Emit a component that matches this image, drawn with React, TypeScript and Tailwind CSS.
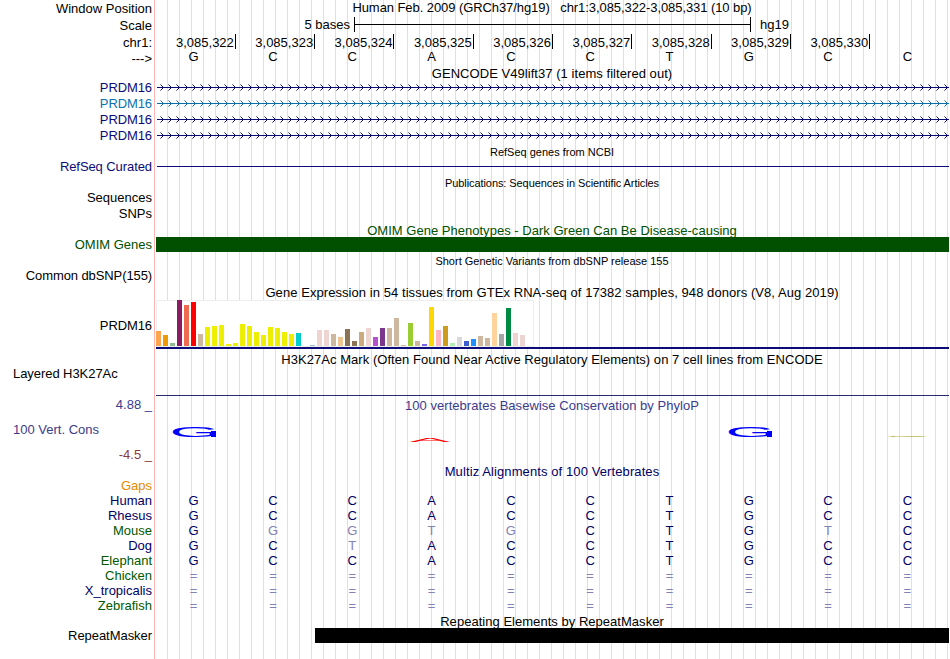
import type { ReactNode } from "react"

const positions = [
  "3,085,322",
  "3,085,323",
  "3,085,324",
  "3,085,325",
  "3,085,326",
  "3,085,327",
  "3,085,328",
  "3,085,329",
  "3,085,330",
]

const genes = [
  { text: "text-[#0c0c78]", color: "#0c0c78" },
  { text: "text-[#0c72b0]", color: "#0c6eaa" },
  { text: "text-[#0c0c78]", color: "#0c0c78" },
  { text: "text-[#0c0c78]", color: "#0c0c78" },
]

// GTEx tissues: [bar height, colour]
const tissues: [number, string][] = [
  [15, "#ffa54f"],
  [11, "#ee9a00"],
  [3, "#8fbc8f"],
  [46, "#8b1c62"],
  [41, "#ee6a50"],
  [44, "#ff0000"],
  [12, "#cdb79e"],
  [19, "#eeee00"],
  [20, "#eeee00"],
  [21, "#eeee00"],
  [2, "#eeee00"],
  [3, "#eeee00"],
  [22, "#eeee00"],
  [20, "#eeee00"],
  [14, "#eeee00"],
  [11, "#eeee00"],
  [19, "#eeee00"],
  [18, "#eeee00"],
  [14, "#eeee00"],
  [12, "#eeee00"],
  [13, "#00cdcd"],
  [0, "#ee82ee"],
  [1, "#9ac0cd"],
  [16, "#eed5d2"],
  [16, "#eed5d2"],
  [12, "#cdb79e"],
  [9, "#eec591"],
  [17, "#8b7355"],
  [5, "#8b7355"],
  [14, "#cdaa7d"],
  [18, "#eed5d2"],
  [9, "#b452cd"],
  [18, "#7a378b"],
  [18, "#cdb79e"],
  [28, "#cdb79e"],
  [1, "#cdb79e"],
  [23, "#9acd32"],
  [5, "#cdb79e"],
  [2, "#7a67ee"],
  [39, "#ffd700"],
  [16, "#ffb6c1"],
  [20, "#cd9b1d"],
  [3, "#b4eeb4"],
  [9, "#d9d9d9"],
  [5, "#3a5fcd"],
  [7, "#1e90ff"],
  [10, "#cdb79e"],
  [8, "#cdb79e"],
  [33, "#ffd39b"],
  [12, "#a6a6a6"],
  [38, "#008b45"],
  [13, "#eed5d2"],
  [11, "#eed5d2"],
  [0, "#ff00ff"],
]

const species = [
  { name: "Human", bases: "GCCACCTGCC", color: "text-[#000064]" },
  { name: "Rhesus", bases: "GCCACCTGCC", color: "text-[#000064]" },
  { name: "Mouse", bases: "GGGTGCTGTC", color: "text-[#005a00]" },
  { name: "Dog", bases: "GCTACCTGCC", color: "text-[#000064]" },
  { name: "Elephant", bases: "GCCACCTGCC", color: "text-[#005a00]" },
  { name: "Chicken", bases: "==========", color: "text-[#005a00]" },
  { name: "X_tropicalis", bases: "==========", color: "text-[#000064]" },
  { name: "Zebrafish", bases: "==========", color: "text-[#005a00]" },
]

const reference = "GCCACCTGCC"

function Track({ label, height, labelClass = "", children }: {
  label?: ReactNode
  height: string
  labelClass?: string
  children?: ReactNode
}) {
  return (
    <div className={`grid grid-cols-[155px_794px] ${height}`}>
      <div className={`pr-[3px] text-right ${labelClass}`}>{label}</div>
      <div>{children}</div>
    </div>
  )
}

function Title({ children, className = "" }: { children: ReactNode; className?: string }) {
  return <div className={`text-center whitespace-pre ${className}`}>{children}</div>
}

function Bases({ bases, compare = false }: { bases: string; compare?: boolean }) {
  return (
    <div className="-ml-px grid w-[793px] grid-cols-10 text-center">
      {bases.split("").map((base, i) => (
        <span key={i} className={!compare ? "" : base === reference[i] ? "text-[#000064]" : "text-[#8282b4]"}>
          {base}
        </span>
      ))}
    </div>
  )
}

function Transcript({ id, color }: { id: string; color: string }) {
  return (
    <svg width="792" height="16" className="ml-0.5 block" shapeRendering="crispEdges">
      <defs>
        <pattern id={id} width="8" height="16" patternUnits="userSpaceOnUse">
          <path d="M4 5h1v1h-1zM5 6h1v1h-1zM5 8h1v1h-1zM4 9h1v1h-1z" fill={color} />
          <path d="M3 4h1v1h-1zM3 10h1v1h-1z" fill={color} opacity="0.55" />
        </pattern>
      </defs>
      <rect width="792" height="16" fill={`url(#${id})`} />
      <rect y="7" width="792" height="1" fill={color} />
    </svg>
  )
}

function Expression() {
  return (
    <div className="ml-px">
      <div className="flex h-[47px] w-[378px] items-end gap-0.5 border border-[#eeeeee] bg-white">
        {tissues.map(([height, color], i) => (
          <div key={i} className="relative -left-px w-[5px] shrink-0" style={{ height, backgroundColor: color }} />
        ))}
      </div>
      <div className="h-0.5 bg-[#0c0c78]" />
    </div>
  )
}

function Conservation() {
  return (
    <svg width="794" height="48" className="block" fontFamily="Liberation Sans, sans-serif" fontSize="10">
      <text transform="translate(14.5 23.9) scale(6.5 1.53)" fill="#0000ff">G</text>
      <rect x="56" y="18" width="5" height="6" fill="#0000ff" />
      <text transform="translate(254.5 28.6) scale(6.1 0.52)" fill="#ff0000">A</text>
      <text transform="translate(570.5 23.9) scale(6.5 1.53)" fill="#0000ff">G</text>
      <rect x="612" y="18" width="5" height="6" fill="#0000ff" />
      <text transform="translate(729.5 24) scale(6.3 0.14)" fill="#a0a000">C</text>
    </svg>
  )
}

export default function App() {
  return (
    <div className="h-[659px] w-[950px] overflow-hidden bg-white font-['Liberation_Sans',Arial,sans-serif] text-[13px] leading-[15px] text-black">
      <div className="h-full w-[949px] bg-[linear-gradient(to_right,#ffb4b4_1px,transparent_1px),repeating-linear-gradient(to_right,transparent_0px,transparent_11px,#dcdcff_11px,#dcdcff_12px)] bg-[position:154px_0,156px_0] bg-no-repeat">
        <Track label="Window Position" height="h-[17px]" labelClass="pt-px">
          <Title className="tracking-[-0.075px]">{"Human Feb. 2009 (GRCh37/hg19)   chr1:3,085,322-3,085,331 (10 bp)"}</Title>
        </Track>

        <Track label="Scale" height="h-[17px]" labelClass="pt-px">
          <div className="flex">
            <span className="w-[195px] text-right">5 bases</span>
            <div className="ml-1 flex h-[15px] w-[397px] items-center border-x border-black">
              <div className="h-px w-full bg-black" />
            </div>
            <span className="ml-[9px]">hg19</span>
          </div>
        </Track>

        <Track label="chr1:" height="h-[15px]" labelClass="pt-px">
          <div className="ml-[1.55px] flex">
            {positions.map((position) => (
              <div key={position} className="h-[15px] w-[79.3px] border-r border-black pt-px pr-px text-right">
                {position}
              </div>
            ))}
          </div>
        </Track>

        <Track label="--->" height="h-[17px]" labelClass="pt-0.5">
          <Bases bases={reference} />
        </Track>

        {/* Genes */}
        <Track height="h-[14px]">
          <Title className="tracking-[0.05px]">GENCODE V49lift37 (1 items filtered out)</Title>
        </Track>
        {genes.map((gene, i) => (
          <Track key={i} label="PRDM16" height="h-4" labelClass={`tracking-[-0.1px] ${gene.text}`}>
            <Transcript id={`strand-${i}`} color={gene.color} />
          </Track>
        ))}

        <Track height="h-[15px]">
          <Title className="pt-0.5 text-[11px] leading-[13px]">RefSeq genes from NCBI</Title>
        </Track>
        <Track label="RefSeq Curated" height="h-4" labelClass="tracking-[-0.08px] text-[#0c0c78]">
          <div className="mt-[7px] ml-0.5 h-px bg-[#0c0c78]" />
        </Track>

        <Track height="h-[15px]">
          <Title className="pt-0.5 text-[11px] leading-[13px] tracking-[-0.08px]">Publications: Sequences in Scientific Articles</Title>
        </Track>
        <Track label="Sequences" height="h-4" />
        <Track label="SNPs" height="h-4" />

        {/* Phenotypes and variants */}
        <Track height="h-[15px]">
          <Title className="pt-px tracking-[0.02px] text-[#005000]">OMIM Gene Phenotypes - Dark Green Can Be Disease-causing</Title>
        </Track>
        <Track label="OMIM Genes" height="h-[15px]" labelClass="text-[#005000]">
          <div className="ml-px h-[15px] bg-[#005000]" />
        </Track>

        <Track height="h-4">
          <Title className="pt-[3px] text-[11px] leading-[13px]">Short Genetic Variants from dbSNP release 155</Title>
        </Track>
        <Track label="Common dbSNP(155)" height="h-[17px]" labelClass="tracking-[-0.1px]" />

        {/* Expression and regulation */}
        <Track height="h-[15px]">
          <Title className="tracking-[0.065px]">Gene Expression in 54 tissues from GTEx RNA-seq of 17382 samples, 948 donors (V8, Aug 2019)</Title>
        </Track>
        <Track label="PRDM16" height="h-[52px]" labelClass="pt-[18px] tracking-[-0.1px]">
          <Expression />
        </Track>

        <Track height="h-[14px]">
          <Title className="tracking-[0.045px]">H3K27Ac Mark (Often Found Near Active Regulatory Elements) on 7 cell lines from ENCODE</Title>
        </Track>
        <Track
          label={<div className="pl-[13px] text-left tracking-[-0.06px]">Layered H3K27Ac</div>}
          height="h-[30px]"
        >
          <div className="ml-px h-[30px] border-b border-[#28286e]" />
        </Track>

        {/* Conservation */}
        <Track
          label={
            <div className="flex flex-col gap-[10px]">
              <span>4.88 _</span>
              <span className="pl-[13px] text-left">100 Vert. Cons</span>
              <span className="text-[#8c3c3c]">-4.5 _</span>
            </div>
          }
          height="h-[68px]"
          labelClass="pt-px text-[#3c3c8c]"
        >
          <Title className="pt-0.5 tracking-[0.045px] text-[#3c3c8c]">100 vertebrates Basewise Conservation by PhyloP</Title>
          <Conservation />
        </Track>

        {/* Alignments */}
        <Track height="h-[14px]">
          <Title className="tracking-[0.1px] text-[#000064]">Multiz Alignments of 100 Vertebrates</Title>
        </Track>
        <Track label="Gaps" height="h-[15px]" labelClass="text-[#e68a00]" />
        {species.map((row) => (
          <Track key={row.name} label={row.name} height="h-[15px]" labelClass={row.color}>
            <Bases bases={row.bases} compare />
          </Track>
        ))}

        {/* Repeats */}
        <Track height="h-[15px]">
          <Title className="pt-px tracking-[0.03px]">Repeating Elements by RepeatMasker</Title>
        </Track>
        <Track label="RepeatMasker" height="h-[15px]" labelClass="tracking-[-0.05px]">
          <div className="ml-40 h-[15px] bg-black" />
        </Track>
      </div>
    </div>
  )
}
